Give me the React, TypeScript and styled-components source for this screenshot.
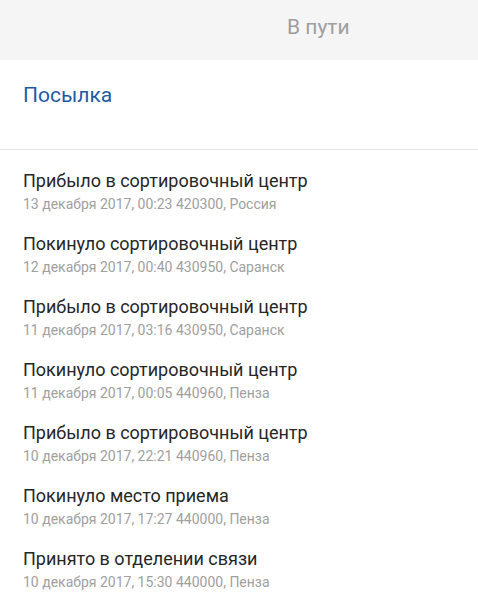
import React from "react";
import styled, { createGlobalStyle } from "styled-components";

const Global = createGlobalStyle`
  html, body { margin: 0; padding: 0; background: #fff; }
  body { font-family: Roboto, "Noto Sans", Arial, sans-serif; }
`;

const Page = styled.div`
  width: 478px;
  display: flex;
  flex-direction: column;
`;

const Header = styled.div`
  height: 60px;
  background: #f5f5f5;
  display: flex;
  align-items: center;
  padding-left: 287px;
  box-sizing: border-box;
`;

const Status = styled.div`
  font-size: 21px;
  color: #9e9e9e;
  line-height: 1;
  margin-top: -6px;
`;

const TitleBlock = styled.div`
  height: 90px;
  padding: 23px 23px 0;
  box-sizing: border-box;
  border-bottom: 1px solid #e4e4e4;
`;

const Title = styled.div`
  font-size: 21px;
  color: #1d5aa4;
  line-height: 24px;
`;

const List = styled.div`
  display: flex;
  flex-direction: column;
  padding: 20px 23px 0;
`;

const Item = styled.div`
  height: 63px;
  display: flex;
  flex-direction: column;
`;

const EventName = styled.div`
  font-size: 18px;
  color: #262626;
  line-height: 22px;
`;

const EventMeta = styled.div`
  font-size: 14px;
  color: #a0a0a0;
  line-height: 18px;
  margin-top: 3px;
`;

const events = [
  ["Прибыло в сортировочный центр", "13 декабря 2017, 00:23 420300, Россия"],
  ["Покинуло сортировочный центр", "12 декабря 2017, 00:40 430950, Саранск"],
  ["Прибыло в сортировочный центр", "11 декабря 2017, 03:16 430950, Саранск"],
  ["Покинуло сортировочный центр", "11 декабря 2017, 00:05 440960, Пенза"],
  ["Прибыло в сортировочный центр", "10 декабря 2017, 22:21 440960, Пенза"],
  ["Покинуло место приема", "10 декабря 2017, 17:27 440000, Пенза"],
  ["Принято в отделении связи", "10 декабря 2017, 15:30 440000, Пенза"],
];

export default function App() {
  return (
    <Page>
      <Global />
      <Header>
        <Status>В пути</Status>
      </Header>
      <TitleBlock>
        <Title>Посылка</Title>
      </TitleBlock>
      <List>
        {events.map(([name, meta], i) => (
          <Item key={i}>
            <EventName>{name}</EventName>
            <EventMeta>{meta}</EventMeta>
          </Item>
        ))}
      </List>
    </Page>
  );
}
